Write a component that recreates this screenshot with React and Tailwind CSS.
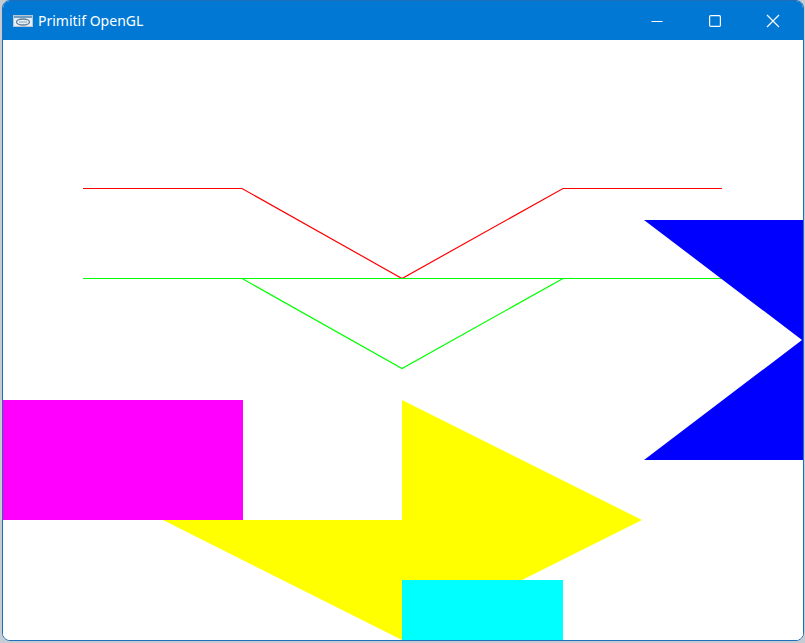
import React from "react";

function AppIcon() {
  return (
    <svg width="20" height="12" viewBox="0 0 20 12" className="block">
      <rect x="0.5" y="0.5" width="19" height="11" fill="#e8eef3" stroke="#b9c7d2" />
      <rect x="1" y="1" width="18" height="2" fill="#6f9ec4" />
      <ellipse cx="10" cy="7" rx="6.5" ry="3" fill="none" stroke="#5d7f99" strokeWidth="1.3" />
      <path d="M6 7 h8" stroke="#8aa6bb" strokeWidth="1" />
    </svg>
  );
}

function TitleBar() {
  return (
    <div className="flex h-[39px] items-center bg-[#0078d4] text-white">
      <div className="ml-[10px] mr-[5px] flex h-full items-center">
        <AppIcon />
      </div>
      <span
        className="text-[14px] leading-none"
        style={{ fontFamily: '"Noto Sans", "Open Sans", sans-serif' }}
      >
        Primitif OpenGL
      </span>
      <div className="ml-auto mr-[1px] flex h-full">
        <div className="flex h-full w-[58px] items-center justify-center">
          <svg width="12" height="12" viewBox="0 0 12 12">
            <path d="M0.5 6.5 H11.5" stroke="white" strokeWidth="1.2" />
          </svg>
        </div>
        <div className="flex h-full w-[58px] items-center justify-center">
          <svg width="12" height="12" viewBox="0 0 12 12">
            <rect x="0.6" y="0.6" width="10.8" height="10.8" rx="1.2" fill="none" stroke="white" strokeWidth="1.2" />
          </svg>
        </div>
        <div className="flex h-full w-[58px] items-center justify-center">
          <svg width="14" height="14" viewBox="0 0 14 14">
            <path d="M1 1 L13 13 M13 1 L1 13" stroke="white" strokeWidth="1.2" />
          </svg>
        </div>
      </div>
    </div>
  );
}

function Scene() {
  return (
    <svg width="800" height="600" viewBox="0 0 800 600" className="block bg-white">
      <polyline
        points="80,148.5 239,148.5 399,238.5 560,148.5 719,148.5"
        fill="none"
        stroke="#ff0000"
        strokeWidth="1.2"
      />
      <polyline points="80,238.5 719,238.5" fill="none" stroke="#00ff00" strokeWidth="1.2" />
      <polyline
        points="239,238.5 399,328.5 560,238.5"
        fill="none"
        stroke="#00ff00"
        strokeWidth="1.2"
      />
      <polygon points="641,180 800,180 800,420 641,420 799,300" fill="#0000ff" />
      <rect x="0" y="360" width="240" height="120" fill="#ff00ff" />
      <polygon points="399,360 639,480 399,600 160,480 399,480" fill="#ffff00" />
      <rect x="399" y="540" width="161" height="60" fill="#00ffff" />
    </svg>
  );
}

export default function App() {
  return (
    <div className="h-[643px] w-[805px] overflow-hidden bg-[#c5ccd3]">
      <div className="ml-[2px] w-[802px] overflow-hidden rounded-[8px] border border-[#1f6fb8] bg-white">
        <TitleBar />
        <Scene />
      </div>
    </div>
  );
}
